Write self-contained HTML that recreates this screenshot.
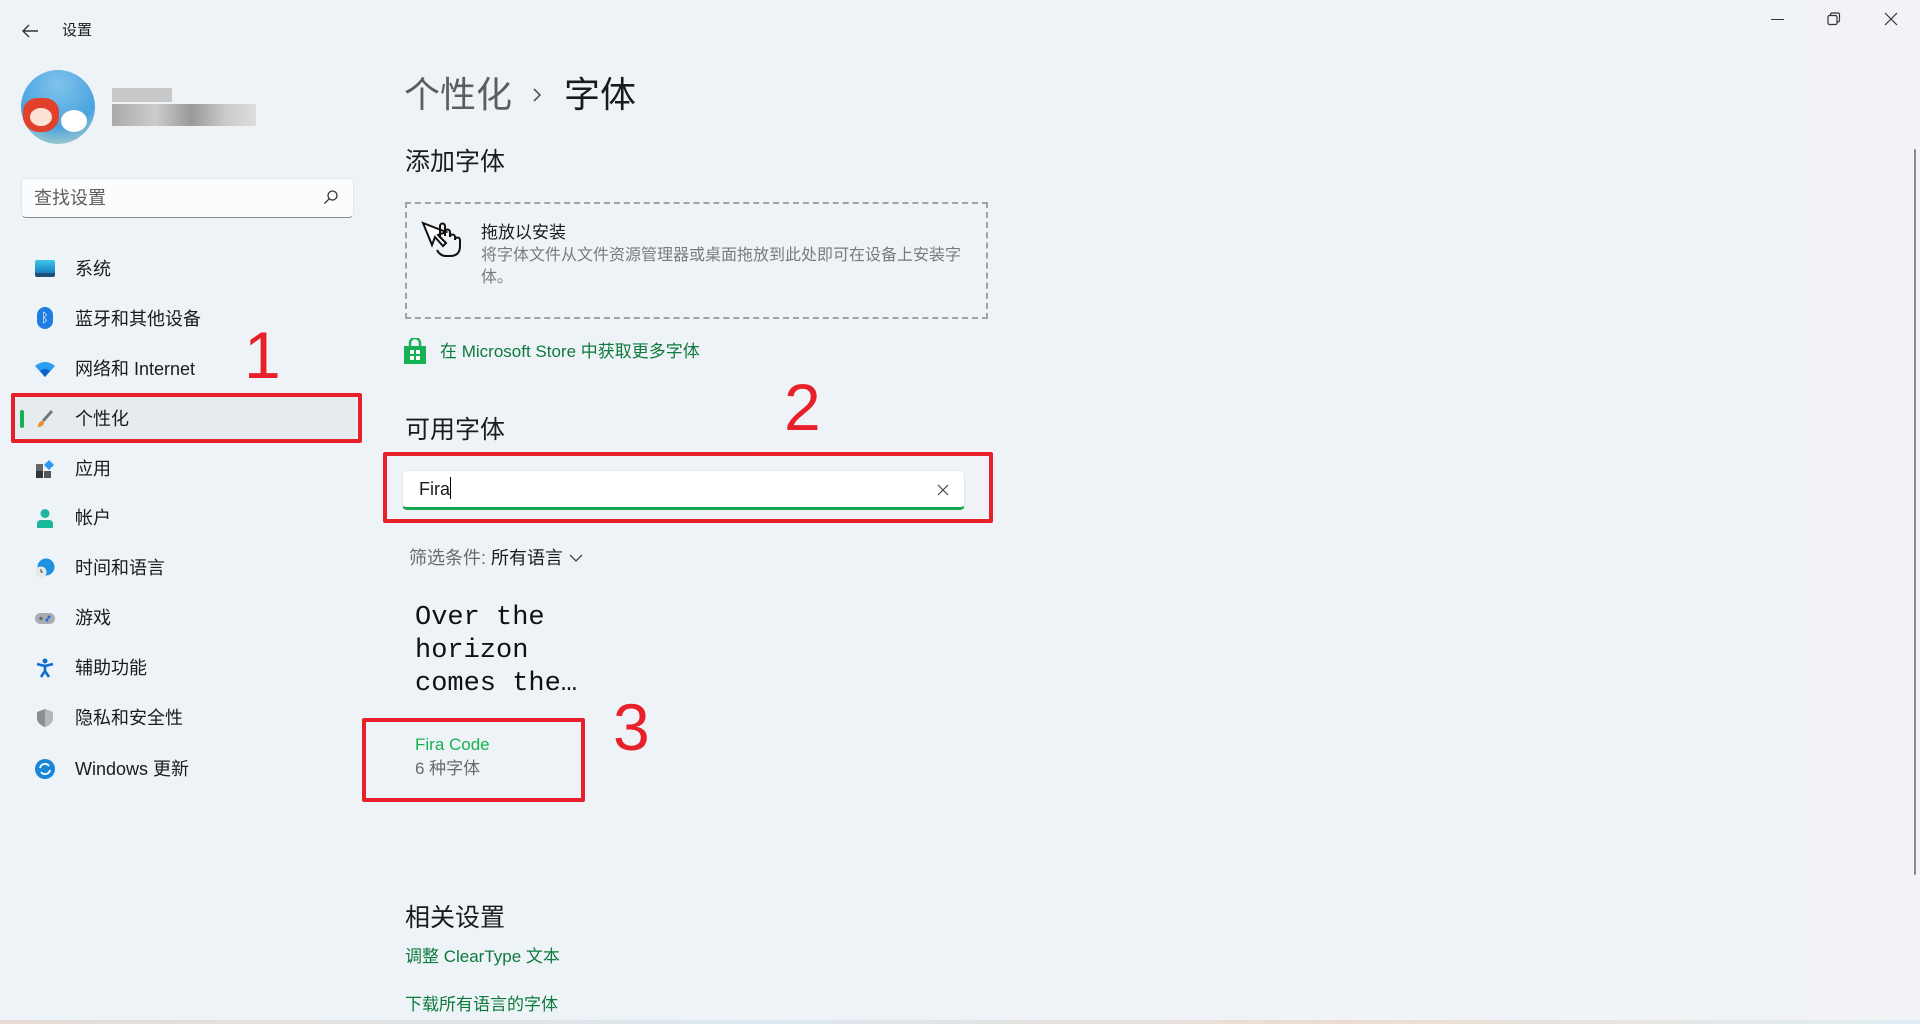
<!DOCTYPE html>
<html><head><meta charset="utf-8"><style>
*{margin:0;padding:0;box-sizing:border-box}
body{width:1920px;height:1024px;overflow:hidden;background:linear-gradient(90deg,#eef3f8 0%,#eff3f8 60%,#f1f3f6 100%);font-family:"Liberation Sans","Noto Sans CJK SC",sans-serif;color:#1b1b1b;position:relative}
.a{position:absolute;white-space:nowrap}
.nav{position:absolute;left:75px;font-size:18px;line-height:24px}
.ic{position:absolute;left:35px;width:20px;height:20px}
.red{position:absolute;border:4px solid #e8202a;border-radius:2px}
.num{position:absolute;color:#e8202a;font-family:"Liberation Sans",sans-serif;font-size:66px;line-height:66px}
.grn{color:#0e7a3b}
</style></head><body>
<svg class="a" style="left:20px;top:22px" width="20" height="18" viewBox="0 0 20 18"><path d="M18 9H3M9 3L3 9l6 6" stroke="#333" stroke-width="1.4" fill="none"/></svg>
<div class="a" style="left:62px;top:21px;font-size:15px;line-height:20px">设置</div>
<div class="a" style="left:1771px;top:19px;width:13px;height:1px;background:#333"></div>
<svg class="a" style="left:1827px;top:12px" width="14" height="14"><rect x="1" y="3.5" width="9" height="9" rx="1.5" fill="none" stroke="#333" stroke-width="1.2"/><path d="M3.5 3.5V2.5a1.5 1.5 0 011.5-1.5h6a1.5 1.5 0 011.5 1.5v6a1.5 1.5 0 01-1.5 1.5H10" fill="none" stroke="#333" stroke-width="1.2"/></svg>
<svg class="a" style="left:1884px;top:12px" width="14" height="14"><path d="M1 1l12 12M13 1L1 13" stroke="#333" stroke-width="1.2"/></svg>
<div class="a" style="left:21px;top:70px;width:74px;height:74px;border-radius:50%;background:radial-gradient(circle at 50% 20%,#7fc3ec,#4aa3e0 60%,#c5d9c0 100%);overflow:hidden">
<div style="position:absolute;left:2px;top:28px;width:36px;height:34px;background:#e1402a;border-radius:40% 40% 45% 45%"></div>
<div style="position:absolute;left:9px;top:38px;width:22px;height:18px;background:#fbe3d6;border-radius:50%"></div>
<div style="position:absolute;left:40px;top:40px;width:26px;height:22px;background:#fff;border-radius:50%"></div>
</div>
<div class="a" style="left:112px;top:88px;width:60px;height:14px;background:#c8c8c8"></div>
<div class="a" style="left:112px;top:104px;width:144px;height:22px;background:linear-gradient(90deg,#aaa,#ccc 30%,#999 55%,#ccc 80%,#ddd)"></div>
<div class="a" style="left:21px;top:178px;width:333px;height:40px;background:#fbfcfd;border:1px solid #e3e6ea;border-bottom:1px solid #8a8a8a;border-radius:5px"></div>
<div class="a" style="left:34px;top:185px;font-size:18px;line-height:26px;color:#5f5f5f">查找设置</div>
<svg class="a" style="left:323px;top:189px" width="16" height="16"><circle cx="9.5" cy="6.5" r="4.5" fill="none" stroke="#333" stroke-width="1.3"/><path d="M6.3 9.7L1.5 14.5" stroke="#333" stroke-width="1.3"/></svg>
<div class="a" style="left:15px;top:397px;width:342px;height:42px;background:#e6ebf0;border-radius:4px"></div>
<div class="a" style="left:20px;top:410px;width:4px;height:18px;background:#16b152;border-radius:2px"></div>
<div class="ic" style="top:260px;height:17px;background:linear-gradient(#3ec6e8,#1a7fc4);border-bottom:4px solid #1c4f7a;border-radius:2px"></div>
<div class="nav" style="top:257px">系统</div>
<div class="ic" style="left:37px;top:307px;width:16px;height:22px;background:#1d7ee0;border-radius:8px;color:#fff;font-size:13px;text-align:center;line-height:22px">ᛒ</div>
<div class="nav" style="top:307px">蓝牙和其他设备</div>
<svg class="ic" style="top:360px" viewBox="0 0 20 20"><path d="M0 6Q10-2 20 6L10 17Z" fill="#2a9ef0"/><path d="M5 11Q10 7 15 11L10 17Z" fill="#0a5ec4"/></svg>
<div class="nav" style="top:357px">网络和 Internet</div>
<svg class="ic" style="top:409px" viewBox="0 0 20 20"><path d="M17 2L8 12" stroke="#777" stroke-width="3"/><path d="M3 18Q3 12 8 12l1 2Q8 18 3 18Z" fill="#f08a24"/></svg>
<div class="nav" style="top:407px">个性化</div>
<svg class="ic" style="top:459px" viewBox="0 0 20 20"><rect x="1" y="5" width="7" height="7" fill="#666"/><rect x="1" y="12" width="7" height="7" fill="#333"/><rect x="9" y="12" width="7" height="7" fill="#555"/><path d="M14 1l5 5-5 5-5-5z" fill="#2b9af3"/></svg>
<div class="nav" style="top:457px">应用</div>
<svg class="ic" style="top:508px" viewBox="0 0 20 20"><circle cx="10" cy="5.5" r="4.5" fill="#1db89b"/><path d="M2 20v-4q0-4 4-4h8q4 0 4 4v4z" fill="#1db89b"/></svg>
<div class="nav" style="top:506px">帐户</div>
<svg class="ic" style="top:558px" viewBox="0 0 20 20"><circle cx="11" cy="9" r="8.5" fill="#1e90e0"/><circle cx="6" cy="14" r="5.5" fill="#e8e8e8"/><path d="M6 11v3h2" stroke="#444" fill="none"/></svg>
<div class="nav" style="top:556px">时间和语言</div>
<svg class="ic" style="top:608px" viewBox="0 0 20 20"><rect x="0" y="5" width="20" height="11" rx="5.5" fill="#a9adb2"/><circle cx="14" cy="9" r="1.5" fill="#1b6fd8"/><circle cx="12" cy="12" r="1.5" fill="#1b6fd8"/><path d="M4 10.5h4M6 8.5v4" stroke="#555"/></svg>
<div class="nav" style="top:606px">游戏</div>
<svg class="ic" style="top:658px" viewBox="0 0 20 20"><circle cx="10" cy="3" r="2.5" fill="#0f6cd0"/><path d="M2 6l8 2 8-2M10 8v5l-4 6M10 13l4 6" stroke="#0f6cd0" stroke-width="2.6" fill="none"/></svg>
<div class="nav" style="top:656px">辅助功能</div>
<svg class="ic" style="top:708px" viewBox="0 0 20 20"><path d="M10 1L2 4v6q0 6 8 9 8-3 8-9V4z" fill="#8a8d91"/><path d="M10 1v18q8-3 8-9V4z" fill="#b5b8bb"/></svg>
<div class="nav" style="top:706px">隐私和安全性</div>
<svg class="ic" style="top:759px" viewBox="0 0 20 20"><circle cx="10" cy="10" r="10" fill="#1a86d8"/><path d="M5 9a5 5 0 019-2M15 11a5 5 0 01-9 2" stroke="#fff" stroke-width="1.8" fill="none"/></svg>
<div class="nav" style="top:757px">Windows 更新</div>
<div class="red" style="left:11px;top:393px;width:351px;height:50px"></div>
<div class="num" style="left:244px;top:322px">1</div>
<div class="a" style="left:404px;top:72px;font-size:36px;line-height:46px;color:#5d5d5d">个性化</div>
<svg class="a" style="left:532px;top:88px" width="10" height="14"><path d="M2 1l6 6-6 6" stroke="#555" stroke-width="1.6" fill="none"/></svg>
<div class="a" style="left:564px;top:72px;font-size:36px;line-height:46px">字体</div>
<div class="a" style="left:405px;top:146px;font-size:25px;line-height:32px">添加字体</div>
<div class="a" style="left:405px;top:202px;width:583px;height:117px;border:2px dashed #a0a3a6"></div>
<svg class="a" style="left:420px;top:220px" width="44" height="40" viewBox="0 0 44 40"><path d="M3 3l9 22 3-8 8 9 3-3-8-8 8-3z" fill="#fff" stroke="#111" stroke-width="2"/><path d="M20 18V6a2.5 2.5 0 015 0v10V12a2.5 2.5 0 015 0v5a2.5 2.5 0 015 0v3a2.5 2.5 0 015 0v6q0 10-10 10h-4q-6 0-9-6" fill="none" stroke="#111" stroke-width="2"/></svg>
<div class="a" style="left:481px;top:221px;font-size:17px;line-height:24px">拖放以安装</div>
<div class="a" style="left:481px;top:245px;font-size:16px;line-height:22px;color:#7a7a7a">将字体文件从文件资源管理器或桌面拖放到此处即可在设备上安装字<br>体。</div>
<svg class="a" style="left:404px;top:338px" width="22" height="26" viewBox="0 0 22 26"><path d="M6 8V5a5 5 0 0110 0v3" stroke="#16b152" stroke-width="2.4" fill="none"/><rect x="0" y="8" width="22" height="18" fill="#16b152"/><rect x="6" y="12" width="4" height="4" fill="#fff"/><rect x="12" y="12" width="4" height="4" fill="#fff"/><rect x="6" y="18" width="4" height="4" fill="#fff"/><rect x="12" y="18" width="4" height="4" fill="#fff"/></svg>
<div class="a grn" style="left:440px;top:340px;font-size:17px;line-height:24px">在 Microsoft Store 中获取更多字体</div>
<div class="num" style="left:784px;top:374px">2</div>
<div class="a" style="left:405px;top:414px;font-size:25px;line-height:32px">可用字体</div>
<div class="a" style="left:402px;top:470px;width:563px;height:40px;background:#fff;border:1px solid #e4e6e9;border-bottom:3px solid #17a34f;border-radius:5px"></div>
<div class="a" style="left:419px;top:477px;font-size:18px;line-height:24px">Fira<span style="display:inline-block;width:1px;height:22px;background:#000;vertical-align:-4px"></span></div>
<svg class="a" style="left:937px;top:484px" width="12" height="12"><path d="M1 1l10 10M11 1L1 11" stroke="#444" stroke-width="1.2"/></svg>
<div class="red" style="left:383px;top:452px;width:610px;height:71px"></div>
<div class="a" style="left:409px;top:546px;font-size:18px;line-height:24px;color:#6a6a6a">筛选条件: <span style="color:#1b1b1b">所有语言</span></div>
<svg class="a" style="left:569px;top:553px" width="14" height="10"><path d="M1 2l6 6 6-6" stroke="#444" stroke-width="1.3" fill="none"/></svg>
<div class="a" style="left:415px;top:602px;font-family:'Liberation Mono','DejaVu Sans Mono',monospace;font-size:27px;line-height:33px;color:#111">Over the<br>horizon<br>comes the…</div>
<div class="a" style="left:415px;top:734px;font-size:17px;line-height:22px;color:#16b152">Fira Code</div>
<div class="a" style="left:415px;top:758px;font-size:17px;line-height:22px;color:#6a6a6a">6 种字体</div>
<div class="red" style="left:362px;top:718px;width:223px;height:84px"></div>
<div class="num" style="left:613px;top:694px">3</div>
<div class="a" style="left:405px;top:902px;font-size:25px;line-height:32px">相关设置</div>
<div class="a grn" style="left:405px;top:945px;font-size:17px;line-height:24px">调整 ClearType 文本</div>
<div class="a grn" style="left:405px;top:993px;font-size:17px;line-height:24px">下载所有语言的字体</div>
<div class="a" style="left:1914px;top:149px;width:2px;height:726px;background:#8a8a8a;border-radius:1px"></div>
<div class="a" style="left:0;top:1020px;width:1920px;height:4px;background:linear-gradient(90deg,#e7dcd5,#dce8f0 40%,#ecdcd0 70%,#e0eef4)"></div>
</body></html>
